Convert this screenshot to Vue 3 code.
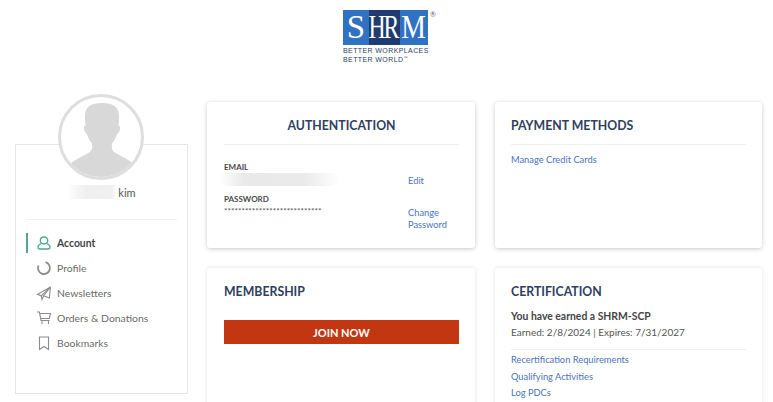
<template>
  <div class="page">
    <header class="logo">
      <div class="logo-mark">
        <div class="logo-box">
          <span class="ls">S</span>
          <span class="lh"><span class="lh-text">HR</span></span>
          <span class="lm"><span class="lm-text">M</span></span>
        </div>
        <span class="reg">®</span>
      </div>
      <div class="tagline">BETTER WORKPLACES</div>
      <div class="tagline">BETTER WORLD<sup>™</sup></div>
    </header>

    <div class="main">
      <aside class="side">
        <div class="avatar">
          <svg viewBox="0 6 80 80" width="80" height="80">
            <path
              d="M40 12c-9 0-15.500 3.500-16 12-.3 4 .3 8 .6 11-1.400-.5-2 .6-1.700 2.500.3 2.400 1.500 5 3 5.500 1 4 3 7 5.100 9.200.4 3.500.2 6-1 7.800-3 3.500-15 7-21 13.500 5 4 15 16 32 16s27-12 32-16c-6-6.500-18-10-21-13.500-1.200-1.800-1.400-4.300-1-7.800 2.100-2.200 4.100-5.200 5.100-9.200 1.500-.5 2.700-3.100 3-5.500.3-1.900-.3-3-1.700-2.500.3-3 .9-7 .6-11-.5-8.500-7-12-16-12z"
              fill="#d8d8d8"
            />
          </svg>
        </div>
        <div class="side-box">
          <div class="name"><span class="blur-name"></span>kim</div>
          <nav class="nav">
            <a v-for="item in nav" :key="item.label" class="nav-item" :class="{ active: item.active }">
              <svg viewBox="0 0 16 16" width="16" height="16" fill="none" stroke="currentColor" :stroke-width="item.width || 1.100">
                <path v-for="d in item.paths" :key="d" :d="d" />
              </svg>
              <span>{{ item.label }}</span>
            </a>
          </nav>
        </div>
      </aside>

      <section class="cards">
        <div class="card">
          <h2 class="title center">AUTHENTICATION</h2>
          <div class="auth-row email-row">
            <div class="auth-left">
              <div class="label">EMAIL</div>
              <div class="blur-email"></div>
            </div>
            <a class="link auth-link">Edit</a>
          </div>
          <div class="auth-row">
            <div class="auth-left">
              <div class="label">PASSWORD</div>
              <div class="stars">****************************</div>
            </div>
            <a class="link auth-link change">Change Password</a>
          </div>
        </div>

        <div class="card">
          <h2 class="title">PAYMENT METHODS</h2>
          <a class="link first-link">Manage Credit Cards</a>
        </div>

        <div class="card lower">
          <h2 class="title plain">MEMBERSHIP</h2>
          <button class="join">JOIN NOW</button>
        </div>

        <div class="card lower">
          <h2 class="title plain">CERTIFICATION</h2>
          <p class="earned">You have earned a SHRM-SCP</p>
          <p class="dates">Earned: 2/8/2024 | Expires: 7/31/2027</p>
          <div class="cert-links">
            <a class="link">Recertification Requirements</a>
            <a class="link">Qualifying Activities</a>
            <a class="link">Log PDCs</a>
          </div>
        </div>
      </section>
    </div>
  </div>
</template>

<script setup>
const nav = [
  {
    label: 'Account',
    active: true,
    width: 1.300,
    paths: ['M8 2c-2.300 0-3.700 1.500-3.700 3.600S5.700 9 8 9s3.700-1.300 3.700-3.400S10.300 2 8 2z', 'M5.400 8.500C3.300 9.200 2 10.500 2 12.200 2 13.500 2.800 14 4 14h8c1.200 0 2-.5 2-1.800 0-1.700-1.300-3-3.400-3.700'],
  },
  {
    label: 'Profile',
    width: 1.800,
    paths: ['M9.500 2.200a6 6 0 1 1-7 3.300'],
  },
  {
    label: 'Newsletters',
    paths: ['M14.500 2 1.500 9.300l3.800 1.500L14.500 2z', 'M14.500 2l-1.200 11-5.600-2.300', 'M5.300 10.800 6 14.500l1.700-3.800L14.500 2'],
  },
  {
    label: 'Orders & Donations',
    paths: ['M1 2h2.400L5 10.500h8.500', 'M3.700 3.500H14.500L13.300 8.500H4.600', 'M6 11v3', 'M12.500 11v3'],
  },
  {
    label: 'Bookmarks',
    paths: ['M3.500 2h9v12.500L8 11.500l-4.500 3z'],
  },
]
</script>

<style scoped>
.page {
  width: 773px;
  height: 402px;
  overflow: hidden;
  background: #fff;
  font-family: Lato, "Open Sans", sans-serif;
  color: #4a4a4a;
}

.logo {
  height: 94px;
  box-sizing: border-box;
  padding: 10px 0 0 343px;
}

.logo-mark {
  display: flex;
  align-items: flex-start;
  height: 35px;
  margin-bottom: 2px;
}

.logo-box {
  display: flex;
  width: 85px;
  height: 35px;
  background: #3171c1;
  font-family: "Liberation Serif", serif;
  color: #fff;
  font-size: 33px;
  line-height: 35px;
}

.ls {
  width: 26px;
  text-align: center;
}

.lh {
  width: 31px;
  background: #1f3b70;
  display: flex;
  justify-content: center;
}

.lh-text {
  display: inline-block;
  letter-spacing: -3px;
  transform: scaleX(0.72);
  margin-left: -3px;
}

.lm {
  width: 28px;
  display: flex;
  justify-content: center;
}

.lm-text {
  display: inline-block;
  transform: scaleX(0.84);
}

.reg {
  font-size: 7px;
  line-height: 8px;
  margin-left: 2px;
  color: #555f75;
}

.tagline {
  width: 85px;
  font-family: "Liberation Sans", sans-serif;
  font-size: 7px;
  line-height: 8.500px;
  letter-spacing: 0.4px;
  white-space: nowrap;
  color: #2c3f63;
}

.tagline sup {
  font-size: 4px;
  line-height: 0;
}

.main {
  display: flex;
  gap: 19px;
  padding-left: 15px;
}

.side {
  width: 173px;
  flex: none;
  position: relative;
}

.avatar {
  position: absolute;
  top: 0;
  left: 43px;
  width: 86px;
  height: 86px;
  box-sizing: border-box;
  border: 3px solid #dedede;
  border-radius: 50%;
  overflow: hidden;
  background: #fff;
  z-index: 1;
}

.avatar svg {
  display: block;
}

.side-box {
  margin-top: 50px;
  height: 250px;
  box-sizing: border-box;
  border: 1px solid #e6e6e6;
  padding: 40px 10px 0;
}

.name {
  display: flex;
  justify-content: center;
  font-size: 11px;
  line-height: 16px;
  padding-bottom: 18px;
  border-bottom: 1px solid #f0f0f0;
  color: #555;
}

.blur-name {
  width: 50px;
  height: 14px;
  margin-right: 1px;
  background: linear-gradient(90deg, #fff, #eee 40%, #f0f0f0 90%, #fff);
}

.nav {
  display: flex;
  flex-direction: column;
  gap: 5px;
  padding-top: 13px;
}

.nav-item {
  display: flex;
  align-items: center;
  gap: 5px;
  height: 20px;
  padding-left: 10px;
  font-size: 10.400px;
  color: #6b6b6b;
  position: relative;
}

.nav-item svg {
  color: #8c8c8c;
  flex: none;
}

.nav-item.active {
  color: #444;
  font-weight: 700;
}

.nav-item.active svg {
  color: #4fa88f;
}

.nav-item.active::before {
  content: "";
  position: absolute;
  left: 0;
  top: 0;
  width: 2px;
  height: 20px;
  background: #4fa88f;
}

.cards {
  display: grid;
  grid-template-columns: 268px 267px;
  grid-template-rows: 146px 200px;
  gap: 20px;
  padding-top: 8px;
}

.card {
  box-sizing: border-box;
  background: #fff;
  border-radius: 3px;
  box-shadow: 0 1px 4px rgba(0, 0, 0, 0.22);
  padding: 0 16px;
}

.card:nth-child(odd) {
  padding-left: 17px;
}

.card.lower {
  box-shadow: 0 0 4px rgba(0, 0, 0, 0.12);
}

.title {
  margin: 0;
  height: 42px;
  line-height: 47px;
  font-size: 12.300px;
  font-weight: 700;
  color: #2f4060;
  border-bottom: 1px solid #f0f0f0;
}

.title.center {
  text-align: center;
  margin-bottom: 17px;
}

.title.plain {
  border-bottom: 0;
}

.label {
  font-size: 8px;
  line-height: 10px;
  font-weight: 700;
  color: #4a4a4a;
}

.auth-row {
  display: flex;
}

.auth-left {
  width: 184px;
  flex: none;
}

.email-row {
  height: 32px;
}

.blur-email {
  margin: 1px 0 0 -4px;
  width: 120px;
  height: 13px;
  background: linear-gradient(90deg, #fff, #e9e9e9 20%, #eaeaea 70%, #fff);
}

.stars {
  font-size: 8.200px;
  line-height: 10px;
  margin-top: 2px;
  white-space: nowrap;
  color: #555;
}

.link {
  display: block;
  font-size: 9.300px;
  line-height: 12px;
  color: #4a74bb;
}

.auth-link {
  padding-top: 13px;
}

.change {
  width: 44px;
  padding-top: 13px;
}

.first-link {
  margin-top: 9px;
}

.join {
  display: block;
  width: 100%;
  height: 24px;
  margin-top: 10px;
  border: 0;
  background: #c23711;
  color: #fff;
  font-family: inherit;
  font-size: 11px;
  font-weight: 700;
}

.earned,
.dates {
  margin: 0;
  line-height: 16px;
}

.earned {
  margin-top: -2px;
  font-size: 10.400px;
  font-weight: 700;
  color: #444;
}

.dates {
  font-size: 10px;
  color: #555;
  padding-bottom: 9px;
  border-bottom: 1px solid #f0f0f0;
}

.cert-links {
  display: flex;
  flex-direction: column;
  gap: 4.500px;
  padding-top: 4px;
}
</style>
